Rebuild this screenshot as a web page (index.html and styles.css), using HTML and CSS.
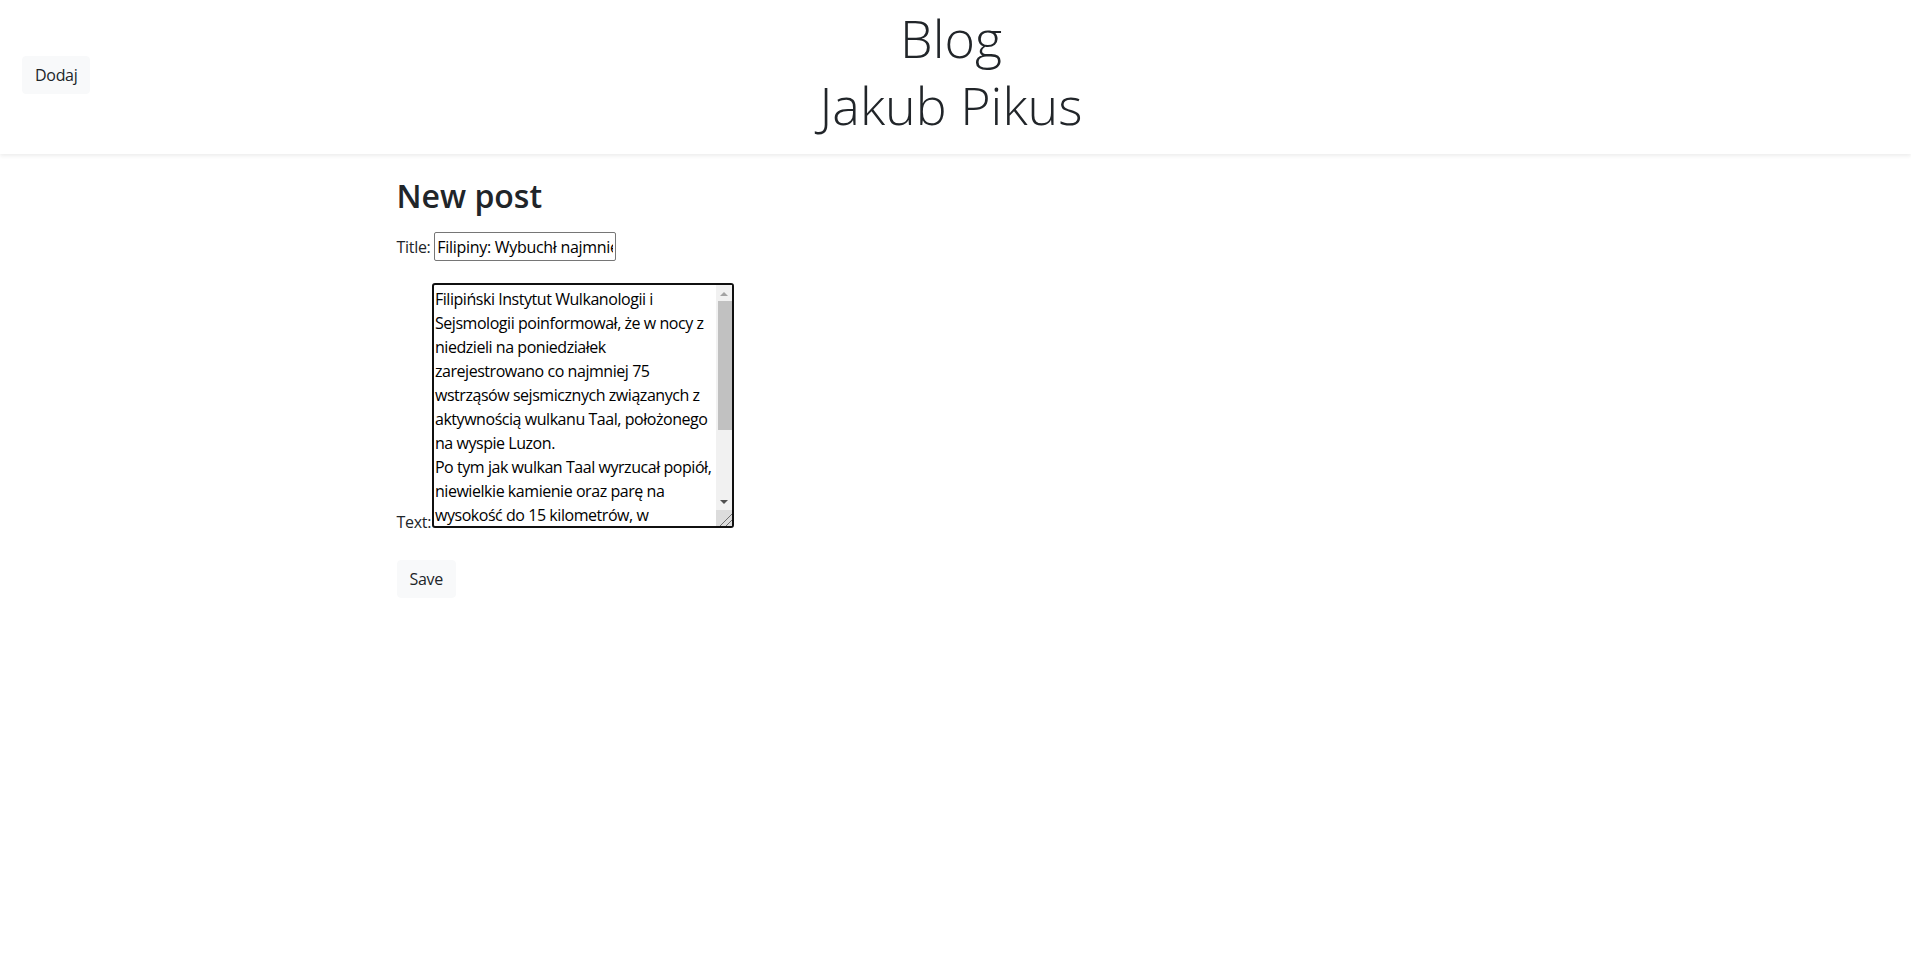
FILE: index.html
```html
<!DOCTYPE html>
<html lang="pl">
<head>
<meta charset="utf-8">
<title>Blog Jakub Pikus</title>
<link rel="stylesheet" href="styles.css">
</head>
<body>
<header class="site-header">
  <div class="header-side">
    <button class="btn btn-light" type="button">Dodaj</button>
  </div>
  <h1 class="site-title">Blog<br>Jakub Pikus</h1>
  <div class="header-side"></div>
</header>
<main class="container">
  <h2 class="page-title">New post</h2>
  <form class="post-form">
    <p class="field field-title"><label>Title: <input class="title-input" type="text" value="Filipiny: Wybuchł najmniejszy wulkan na świecie"></label></p>
    <p class="field field-text"><label>Text: <span class="textarea-wrap"><textarea class="text-input" spellcheck="false">Filipiński Instytut Wulkanologii i Sejsmologii poinformował, że w nocy z niedzieli na poniedziałek zarejestrowano co najmniej 75 wstrząsów sejsmicznych związanych z aktywnością wulkanu Taal, położonego na wyspie Luzon.
Po tym jak wulkan Taal wyrzucał popiół, niewielkie kamienie oraz parę na wysokość do 15 kilometrów, w okolicznych miejscowościach ogłoszono czwarty, w pięciostopniowej skali, poziom zagrożenia. Władze ewakuowały tysiące mieszkańców.</textarea><span class="scrollbar" aria-hidden="true"><span class="sb-btn sb-up"><span class="arrow arrow-up"></span></span><span class="sb-track"><span class="sb-thumb"></span></span><span class="sb-btn sb-down"><span class="arrow arrow-down"></span></span><span class="sb-resizer"></span></span></span></label></p>
    <button class="btn btn-light save-btn" type="submit">Save</button>
  </form>
</main>
</body>
</html>
```

FILE: styles.css
```css
html, body {
  margin: 0;
  padding: 0;
  background: #fff;
}

body {
  font-family: "Open Sans", "Noto Sans", "Liberation Sans", sans-serif;
  font-size: 16px;
  line-height: 1.5;
  letter-spacing: -0.3px;
  color: #212529;
}

.site-header {
  display: grid;
  grid-template-columns: 1fr auto 1fr;
  align-items: center;
  height: 154px;
  box-sizing: border-box;
  padding: 4px 31px 8px 22px;
  box-shadow: 0 2px 4px rgba(0, 0, 0, 0.075);
}

.header-side {
  display: flex;
  align-items: center;
}

.site-title {
  margin: 0 0 8px;
  font-size: 52px;
  font-weight: 300;
  line-height: 67.2px;
  letter-spacing: 0;
  text-align: center;
  color: #212529;
}

.btn {
  display: inline-block;
  font-family: inherit;
  font-size: 16px;
  letter-spacing: -0.3px;
  line-height: 24px;
  padding: 6px 12px;
  border: 1px solid transparent;
  border-radius: 4px;
  cursor: pointer;
}

.btn-light {
  background: #f8f9fa;
  border-color: #f8f9fa;
  color: #212529;
}

.container {
  width: 1140px;
  margin: 0 auto;
  padding: 0 11px;
  box-sizing: border-box;
}

.page-title {
  margin: 23px 0 8px;
  font-size: 32px;
  font-weight: 600;
  letter-spacing: 0;
  line-height: 1.2;
}

.post-form {
  margin: 0;
}

.field {
  margin: 0 0 16px;
}

.field-title {
  margin-top: 17px;
}

.title-input {
  width: 182px;
  height: 29px;
  box-sizing: border-box;
  font-family: inherit;
  font-size: 16px;
  letter-spacing: -0.3px;
  color: #000;
  padding: 1px 2px;
  border: 1px solid #767676;
  border-radius: 2px;
}

.field-text {
  margin-top: 22px;
  margin-bottom: 26px;
}

.textarea-wrap {
  position: relative;
  display: inline-block;
  margin-left: -3px;
  line-height: 0;
  vertical-align: baseline;
}

.text-input {
  width: 302px;
  height: 245px;
  box-sizing: border-box;
  font-family: inherit;
  font-size: 16px;
  letter-spacing: -0.45px;
  line-height: 24px;
  color: #000;
  padding: 2px 16px 2px 1px;
  border: 2px solid #101010;
  border-radius: 3px;
  vertical-align: baseline;
  outline: none;
  resize: none;
  overflow: hidden;
}

.scrollbar {
  position: absolute;
  top: 2px;
  right: 2px;
  bottom: 2px;
  width: 16px;
  display: flex;
  flex-direction: column;
  background: #f1f1f1;
}

.sb-btn {
  height: 16px;
  flex: none;
  display: flex;
  align-items: center;
  justify-content: center;
}

.sb-track {
  flex: 1;
  display: flex;
  flex-direction: column;
}

.sb-thumb {
  height: 129px;
  margin-left: 2px;
  background: #c1c1c1;
}

.arrow {
  width: 0;
  height: 0;
  border-left: 4px solid transparent;
  border-right: 4px solid transparent;
}

.arrow-up {
  border-bottom: 4px solid #a3a3a3;
  margin-top: 1px;
}

.arrow-down {
  border-top: 4px solid #505050;
}

.sb-resizer {
  height: 16px;
  flex: none;
  background-color: #dcdcdc;
  background-image: linear-gradient(135deg, transparent 0 60%, #6e6e6e 60% 65%, transparent 65% 79%, #6e6e6e 79% 84%, transparent 84%);
}

.save-btn {
  margin: 0;
}
```
